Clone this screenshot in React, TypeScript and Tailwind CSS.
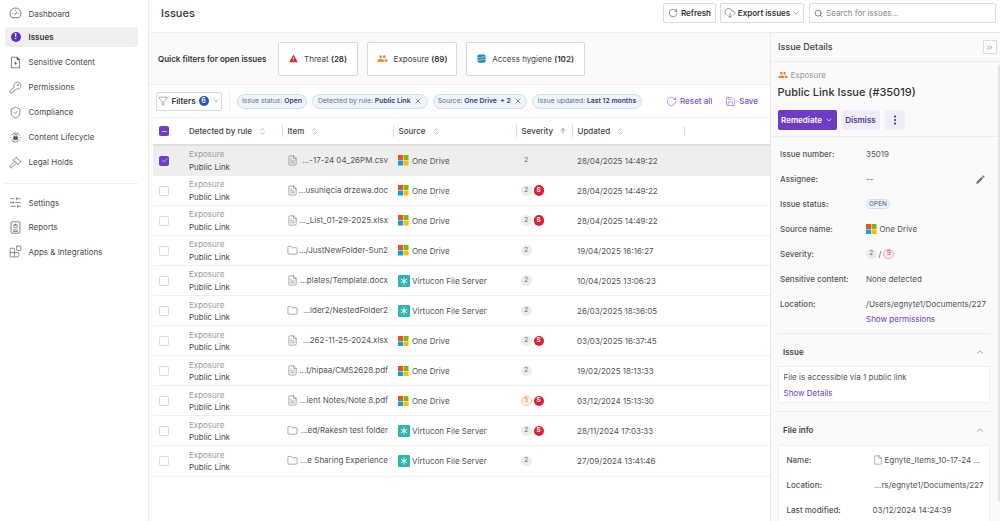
import {
  ArrowUp,
  Blocks,
  Check,
  ChevronDown,
  ChevronUp,
  ChevronsRight,
  ChevronsUpDown,
  CloudDownload,
  EllipsisVertical,
  File,
  FileText,
  Filter,
  Folder,
  Gavel,
  KeyRound,
  Minus,
  RotateCw,
  Save,
  Search,
  ShieldCheck,
  SlidersHorizontal,
  X,
} from "lucide-react";
import { MdEdit, MdPeople } from "react-icons/md";

const WindowsLogo = () => (
  <svg viewBox="0 0 12 12" className="w-[10.5px] h-[10.5px] shrink-0">
    <rect x="0" y="0" width="5.7" height="5.7" fill="#f25022" />
    <rect x="6.3" y="0" width="5.7" height="5.7" fill="#7fba00" />
    <rect x="0" y="6.3" width="5.7" height="5.7" fill="#00a4ef" />
    <rect x="6.3" y="6.3" width="5.7" height="5.7" fill="#ffb900" />
  </svg>
);

const VirtuconLogo = () => (
  <svg viewBox="0 0 12 12" className="w-[12px] h-[12px] shrink-0">
    <rect width="12" height="12" rx="1" fill="#2fb5ad" />
    <path d="M6 2.8v6.4M3.2 4.4l5.6 3.2M8.8 4.4L3.2 7.6" stroke="#e8fbf9" strokeWidth="1" strokeLinecap="round" />
  </svg>
);

const DashboardIcon = () => (
  <svg viewBox="0 0 16 16" className="w-[13px] h-[13px]" fill="none" stroke="#555" strokeWidth="0.9">
    <path d="M3.6 13.2a6.8 6.8 0 1 1 8.8 0z" />
    <path d="M6.8 9.6l3.4-3.2" strokeWidth="1.2" />
    <path d="M3.5 8h1M8 3.6v1M11.5 8h1" />
  </svg>
);

const ContentLifecycleIcon = () => (
  <svg viewBox="0 0 16 16" className="w-[13px] h-[13px]" fill="none" stroke="#555" strokeWidth="0.9">
    <path d="M3 5.5a5.5 5.5 0 0 1 10 0M13 10.5a5.5 5.5 0 0 1-10 0" />
    <path d="M1 8h1M14 8h1" />
    <rect x="5.5" y="7" width="5" height="3.6" rx="0.5" fill="#555" />
    <path d="M6.5 7V5.8a1.5 1.5 0 0 1 3 0V7" />
  </svg>
);

const ReportsIcon = () => (
  <svg viewBox="0 0 16 16" className="w-[13px] h-[13px]" fill="none" stroke="#555" strokeWidth="0.9">
    <rect x="2.5" y="1" width="11" height="14" rx="1.5" />
    <circle cx="8" cy="6.2" r="2.3" />
    <path d="M8 6.2V3.9M5 11h6M5 12.8h6" />
  </svg>
);

const SensitiveIcon = () => (
  <svg viewBox="0 0 16 16" className="w-[13px] h-[13px]" fill="none" stroke="#555" strokeWidth="0.9">
    <path d="M3 1.5h7l3 3v10H3z" />
    <path d="M10 1.5l3 3h-3z" fill="#333" />
    <path d="M6 9h4M8 7v4" />
  </svg>
);

const ThreatIcon = () => (
  <svg viewBox="0 0 12 12" className="w-[9px] h-[9px] shrink-0">
    <path d="M6 0.8L11.8 11H0.2z" fill="#e0242f" />
    <path d="M6 4.4v3.2M6 8.6v1" stroke="#fff" strokeWidth="1" />
  </svg>
);

const HygieneIcon = () => (
  <svg viewBox="0 0 12 12" className="w-[9px] h-[9px] shrink-0">
    <rect x="0.5" y="0.5" width="11" height="11" rx="2.5" fill="#1e8ea8" />
    <path d="M0.5 4.3c2 1 3.5 1 5.5 0s3.5-1 5.5 0M0.5 7.7c2 1 3.5 1 5.5 0s3.5-1 5.5 0" stroke="#e6f6fa" strokeWidth="0.9" fill="none" />
  </svg>
);

type NavItem = { label: string; icon: React.ReactNode };

const navTop: NavItem[] = [
  { label: "Sensitive Content", icon: <SensitiveIcon /> },
  { label: "Permissions", icon: <KeyRound className="w-[13px] h-[13px] text-[#555]" strokeWidth={1.2} /> },
  { label: "Compliance", icon: <ShieldCheck className="w-[13px] h-[13px] text-[#555]" strokeWidth={1.2} /> },
  { label: "Content Lifecycle", icon: <ContentLifecycleIcon /> },
  { label: "Legal Holds", icon: <Gavel className="w-[13px] h-[13px] text-[#555]" strokeWidth={1.2} /> },
];

const navBottom: NavItem[] = [
  { label: "Settings", icon: <SlidersHorizontal className="w-[13px] h-[13px] text-[#555]" strokeWidth={1.2} /> },
  { label: "Reports", icon: <ReportsIcon /> },
  { label: "Apps & Integrations", icon: <Blocks className="w-[13px] h-[13px] text-[#555]" strokeWidth={1.2} /> },
];

const NavRow = ({ item }: { item: NavItem }) => (
  <div className="flex items-center h-[20px] pl-[3px] rounded-[3px] text-[8px] text-[#4a4a4a]">
    <span className="w-[15px] flex justify-center shrink-0">{item.icon}</span>
    <span className="ml-[5.5px]">{item.label}</span>
  </div>
);

const Sidebar = () => (
  <aside className="w-[149px] shrink-0 border-r border-[#ececec] pl-[5px] pr-[10px] pt-[3.5px] flex flex-col">
    <div className="-mb-[1.5px]">
      <NavRow item={{ label: "Dashboard", icon: <DashboardIcon /> }} />
    </div>
    <div className="flex flex-col gap-[5px] mt-[5px]">
      <div className="flex items-center h-[20px] pl-[3px] rounded-[3px] bg-[#efefef] text-[8px] font-semibold text-[#333]">
        <span className="w-[15px] flex justify-center shrink-0">
          <span className="w-[10px] h-[10px] rounded-full bg-[#5b2fc4] text-white text-[7.5px] font-bold flex items-center justify-center">
            !
          </span>
        </span>
        <span className="ml-[5.5px]">Issues</span>
      </div>
      {navTop.map((item) => (
        <NavRow key={item.label} item={item} />
      ))}
    </div>
    <div className="h-[1px] bg-[#efefef] mt-[11px] mb-[8.5px]" />
    <div className="flex flex-col gap-[4.5px]">
      {navBottom.map((item) => (
        <NavRow key={item.label} item={item} />
      ))}
    </div>
  </aside>
);

const Chip = ({ label, value, close, width }: { label: string; value: string; close?: boolean; width: string }) => (
  <div className={`${width} shrink-0 h-[15px] flex items-center justify-center rounded-full bg-[#eef5fd] border border-[#cbe0f7] text-[6.8px] whitespace-nowrap text-[#5f7290]`}>
    <span>{label}&nbsp;</span>
    <span className="font-semibold text-[#2f4279]">{value}</span>
    {close && <X className="w-[8px] h-[8px] ml-[3.5px] text-[#444]" strokeWidth={1.8} />}
  </div>
);

const QuickCard = ({ icon, label, count, width }: { icon: React.ReactNode; label: string; count: string; width: string }) => (
  <div className={`${width} h-[34px] bg-white border border-[#d9d9d9] rounded-[2px] flex items-center justify-center gap-[6px] text-[8px] text-[#444]`}>
    {icon}
    <span>
      {label} <span className="font-semibold text-[#333]">{count}</span>
    </span>
  </div>
);

const Header = ({ label, divider = true }: { label: string; divider?: boolean }) => (
  <div className={`flex items-center h-[12px] gap-[6px] text-[8px] font-medium text-[#444] ${divider ? "border-l border-[#dcdcdc] pl-[4.5px]" : ""}`}>
    <span>{label}</span>
    <ChevronsUpDown className="w-[9px] h-[9px] text-[#999]" strokeWidth={1.5} />
  </div>
);

type Row = {
  item: string;
  type: "file" | "folder";
  source: "one" | "virt";
  sev: string;
  sensitive?: boolean;
  updated: string;
};

const rows: Row[] = [
  { item: "...-17-24 04_26PM.csv", type: "file", source: "one", sev: "2", updated: "28/04/2025 14:49:22" },
  { item: "...usunięcia drzewa.doc", type: "file", source: "one", sev: "2", sensitive: true, updated: "28/04/2025 14:49:22" },
  { item: "..._List_01-29-2025.xlsx", type: "file", source: "one", sev: "2", sensitive: true, updated: "28/04/2025 14:49:22" },
  { item: ".../JustNewFolder-Sun2", type: "folder", source: "one", sev: "2", updated: "19/04/2025 16:16:27" },
  { item: "...plates/Template.docx", type: "file", source: "virt", sev: "2", updated: "10/04/2025 13:06:23" },
  { item: "...lder2/NestedFolder2", type: "folder", source: "virt", sev: "2", updated: "26/03/2025 18:36:05" },
  { item: "...262-11-25-2024.xlsx", type: "file", source: "one", sev: "2", sensitive: true, updated: "03/03/2025 16:37:45" },
  { item: "...t/hipaa/CMS2628.pdf", type: "file", source: "one", sev: "2", updated: "19/02/2025 18:13:33" },
  { item: "...ient Notes/Note 8.pdf", type: "file", source: "one", sev: "5", sensitive: true, updated: "03/12/2024 15:13:30" },
  { item: "...ed/Rakesh test folder", type: "folder", source: "virt", sev: "2", sensitive: true, updated: "28/11/2024 17:03:33" },
  { item: "...e Sharing Experience", type: "folder", source: "virt", sev: "2", updated: "27/09/2024 13:41:46" },
];

const gridCols = "grid grid-cols-[36px_93px_111px_123px_56px_1fr] items-center";

const TableRow = ({ row, selected }: { row: Row; selected: boolean }) => (
  <div className={`${gridCols} h-[30.05px] border-b border-[#efefef] ${selected ? "bg-[#eeeeee]" : ""}`}>
    <div className="pl-[6px]">
      {selected ? (
        <span className="w-[10px] h-[10px] rounded-[2px] bg-[#6d3fc8] flex items-center justify-center">
          <Check className="w-[7px] h-[7px] text-white" strokeWidth={2} />
        </span>
      ) : (
        <span className="block w-[10px] h-[10px] rounded-[2px] border border-[#dcdcdc] bg-white" />
      )}
    </div>
    <div className="flex flex-col gap-[2.5px] text-[8px] leading-[10px]">
      <span className="text-[#9a9a9a]">Exposure</span>
      <span className="text-[#4a4a4a]">Public Link</span>
    </div>
    <div className="flex items-center justify-between pl-[5px] pr-[5px] text-[8px] text-[#555] -mt-[1px]">
      {row.type === "file" ? (
        <FileText className="w-[11px] h-[11px] text-[#666] shrink-0" strokeWidth={1.2} />
      ) : (
        <Folder className="w-[11px] h-[11px] text-[#666] shrink-0" strokeWidth={1.2} />
      )}
      <span className="whitespace-nowrap">{row.item}</span>
    </div>
    <div className="flex items-center pl-[5px] text-[8px] text-[#555]">
      <span className="w-[14px] shrink-0">{row.source === "one" ? <WindowsLogo /> : <VirtuconLogo />}</span>
      <span>{row.source === "one" ? "One Drive" : "Virtucon File Server"}</span>
    </div>
    <div className="flex items-center gap-[2px] pl-[5px]">
      {row.sev === "5" ? (
        <span className="w-[10.5px] h-[10.5px] rounded-full bg-[#fdf0e3] border border-[#f6c896] text-[6.5px] text-[#d98a3c] flex items-center justify-center">5</span>
      ) : (
        <span className="w-[10.5px] h-[10.5px] rounded-full bg-[#ececec] text-[6.5px] text-[#666] flex items-center justify-center">{row.sev}</span>
      )}
      {row.sensitive && (
        <span className="w-[10.5px] h-[10.5px] rounded-full bg-[#dc1f35] text-[6.5px] font-bold text-white flex items-center justify-center">S</span>
      )}
    </div>
    <div className="pl-[5px] text-[8px] text-[#555] whitespace-nowrap">{row.updated}</div>
  </div>
);

const Field = ({ label, children }: { label: string; children: React.ReactNode }) => (
  <div className="flex items-center h-[25px] shrink-0 text-[8px]">
    <span className="w-[86px] shrink-0 font-medium text-[#555]">{label}</span>
    <div className="flex-1 flex items-center text-[#555] whitespace-nowrap">{children}</div>
  </div>
);

const DetailsPanel = () => (
  <aside className="w-[230px] shrink-0 border-l border-t border-[#e8e8e8] bg-[#fafafa] flex flex-col overflow-hidden relative">
    <div className="h-[29px] shrink-0 border-b border-[#ececec] flex items-center justify-between pl-[7px] pr-[3.5px]">
      <span className="text-[9px] font-medium text-[#444]">Issue Details</span>
      <span className="w-[14px] h-[14px] bg-white border border-[#ddd] rounded-[1px] flex items-center justify-center">
        <ChevronsRight className="w-[9px] h-[9px] text-[#555]" strokeWidth={1.4} />
      </span>
    </div>
    <div className="h-[75px] shrink-0 border-b border-[#ececec] px-[6.5px] pt-[7px]">
      <div className="flex items-center gap-[3px] h-[12px] text-[8px] text-[#999]">
        <MdPeople className="w-[10px] h-[10px] text-[#f0842c]" />
        Exposure
      </div>
      <div className="mt-[2px] text-[11px] leading-[18px] font-medium text-[#333] whitespace-nowrap">Public Link Issue (#35019)</div>
      <div className="flex items-center gap-[5px] mt-[9px]">
        <span className="w-[59px] h-[20px] rounded-[2px] bg-[#6d3bc4] text-white text-[8px] font-semibold flex items-center justify-center gap-[3px]">
          Remediate <ChevronDown className="w-[8px] h-[8px]" strokeWidth={2} />
        </span>
        <span className="w-[38px] h-[20px] rounded-[2px] bg-[#f0ecf8] text-[#4f3a8c] text-[8px] font-semibold flex items-center justify-center">Dismiss</span>
        <span className="w-[20px] h-[20px] rounded-[2px] bg-[#f0ecf8] text-[#4f3a8c] flex items-center justify-center">
          <EllipsisVertical className="w-[12px] h-[12px]" strokeWidth={2.5} />
        </span>
      </div>
    </div>
    <div className="pl-[9px] pr-[9px] pt-[4.5px] flex flex-col shrink-0">
      <Field label="Issue number:">35019</Field>
      <Field label="Assignee:">
        <span className="flex-1">--</span>
        <MdEdit className="w-[11px] h-[11px] text-[#777] mr-[5px]" />
      </Field>
      <Field label="Issue status:">
        <span className="h-[10px] w-[24px] rounded-full bg-[#eef5fd] border border-[#cbe0f7] text-[6.5px] leading-[8px] text-center text-[#3d5a94]">OPEN</span>
      </Field>
      <Field label="Source name:">
        <WindowsLogo />
        <span className="ml-[3px]">One Drive</span>
      </Field>
      <Field label="Severity:">
        <span className="w-[10.5px] h-[10.5px] rounded-full bg-[#ececec] text-[6.5px] text-[#666] flex items-center justify-center">2</span>
        <span className="mx-[2px]">/</span>
        <span className="w-[10.5px] h-[10.5px] rounded-full bg-[#fdecee] border border-[#f2a3ac] text-[6.5px] text-[#d0364a] flex items-center justify-center">9</span>
      </Field>
      <Field label="Sensitive content:">None detected</Field>
      <Field label="Location:">/Users/egnyte1/Documents/227</Field>
      <div className="pl-[86px] -mt-[4px] text-[8px] leading-[12px] text-[#6d3fc8]">Show permissions</div>
    </div>
    <div className="ml-[6.5px] mr-[10px] mt-[8.5px] border-t border-[#ececec] shrink-0" />
    <div className="flex items-center justify-between h-[32px] shrink-0 pt-[4px] pl-[12px] pr-[15px] text-[8px] font-semibold text-[#444]">
      Issue <ChevronUp className="w-[10px] h-[10px] text-[#666]" strokeWidth={1.5} />
    </div>
    <div className="ml-[6.5px] mr-[10px] h-[37px] shrink-0 bg-white border border-[#efefef] rounded-[1px] pl-[5px] pt-[4px] text-[8px] text-[#555]">
      <div className="leading-[12px]">File is accessible via 1 public link</div>
      <div className="leading-[12px] mt-[4px] text-[#6d3fc8]">Show Details</div>
    </div>
    <div className="ml-[6.5px] mr-[10px] mt-[8px] border-t border-[#ececec] shrink-0" />
    <div className="flex items-center justify-between h-[33px] shrink-0 pt-[3px] pl-[12px] pr-[15px] text-[8px] font-semibold text-[#444]">
      File info <ChevronUp className="w-[10px] h-[10px] text-[#666]" strokeWidth={1.5} />
    </div>
    <div className="ml-[6.5px] mr-[10px] bg-white border border-[#efefef] rounded-[1px] px-[8px] pt-[1px] shrink-0 h-[90px]">
      <div className="flex items-center h-[25px] text-[8px]">
        <span className="w-[86px] shrink-0 font-medium text-[#555]">Name:</span>
        <File className="w-[10px] h-[10px] text-[#666] shrink-0" strokeWidth={1.2} />
        <span className="ml-[2px] text-[#555] whitespace-nowrap">Egnyte_Items_10-17-24 ...</span>
      </div>
      <div className="flex items-center h-[25px] text-[8px]">
        <span className="w-[86px] shrink-0 font-medium text-[#555]">Location:</span>
        <span className="ml-[2px] text-[#555] whitespace-nowrap">...rs/egnyte1/Documents/227</span>
      </div>
      <div className="flex items-center h-[25px] text-[8px]">
        <span className="w-[86px] shrink-0 font-medium text-[#555]">Last modified:</span>
        <span className="text-[#555] whitespace-nowrap">03/12/2024 14:24:39</span>
      </div>
    </div>
    <div className="absolute right-0 top-[32px] bottom-[20px] w-[2px] bg-[#e4e4e4]" />
  </aside>
);

export default function App() {
  return (
    <div className="w-[1000px] h-[521px] overflow-hidden flex bg-white font-['Inter',sans-serif]">
      <Sidebar />
      <div className="flex-1 min-w-0 flex flex-col">
        {/* top bar */}
        <div className="h-[32px] shrink-0 flex items-center pl-[12px] pr-[4px]">
          <h1 className="text-[11px] font-medium text-[#333] pb-[6px]">Issues</h1>
          <div className="ml-auto flex items-center pb-[6px]">
            <span className="w-[53px] h-[20px] bg-white border border-[#dcdcdc] rounded-[2px] flex items-center justify-center gap-[3px] text-[8px] font-semibold text-[#333]">
              <RotateCw className="w-[10px] h-[10px] text-[#444]" strokeWidth={1.3} />
              Refresh
            </span>
            <span className="w-[84px] h-[20px] ml-[4px] bg-white border border-[#dcdcdc] rounded-[2px] flex items-center justify-center gap-[2px] text-[8px] font-semibold text-[#333]">
              <CloudDownload className="w-[12px] h-[12px] text-[#444]" strokeWidth={1.1} />
              Export issues
              <ChevronDown className="w-[8px] h-[8px] text-[#444]" strokeWidth={1.5} />
            </span>
            <span className="w-[187px] h-[20px] ml-[5px] bg-white border border-[#dcdcdc] rounded-[2px] flex items-center pl-[4px] gap-[3px] text-[8px] text-[#888]">
              <Search className="w-[9px] h-[9px] text-[#333]" strokeWidth={1.5} />
              Search for issues...
            </span>
          </div>
        </div>
        <div className="flex-1 min-h-0 flex">
          <main className="flex-1 min-w-0 flex flex-col">
            <div className="h-[53px] shrink-0 bg-[#fafafa] border-t border-b border-[#efefef] flex items-center pl-[9px]">
              <span className="w-[120px] text-[8px] font-semibold text-[#333] whitespace-nowrap">Quick filters for open issues</span>
              <div className="flex items-center gap-[9px]">
                <QuickCard width="w-[80px]" label="Threat" count="(28)" icon={<ThreatIcon />} />
                <QuickCard width="w-[90px]" label="Exposure" count="(89)" icon={<MdPeople className="w-[11px] h-[11px] text-[#f0842c]" />} />
                <QuickCard width="w-[119px]" label="Access hygiene" count="(102)" icon={<HygieneIcon />} />
              </div>
            </div>
            <div className="h-[32px] shrink-0 flex items-center pl-[7px] pr-[12px]">
              <div className="w-[66px] h-[19px] border border-[#d9d9d9] rounded-[2px] flex items-center justify-center gap-[3px] text-[8px] font-semibold text-[#333]">
                <Filter className="w-[10px] h-[10px] text-[#555]" strokeWidth={1.1} />
                Filters
                <span className="w-[10px] h-[10px] rounded-full bg-[#1d53c4] text-white text-[7px] flex items-center justify-center">6</span>
                <ChevronDown className="w-[8px] h-[8px] text-[#555]" strokeWidth={1.5} />
              </div>
              <div className="w-[1px] h-[20px] bg-[#efefef] ml-[7px] mr-[7px]" />
              <div className="flex items-center gap-[5px]">
                <Chip width="w-[70px]" label="Issue status:" value="Open" />
                <Chip width="w-[116px]" label="Detected by rule:" value="Public Link" close />
                <Chip width="w-[94px]" label="Source:" value={"One Drive\u00A0\u00A0+ 2"} close />
                <Chip width="w-[110px]" label="Issue updated:" value="Last 12 months" />
              </div>
              <div className="ml-auto flex items-center gap-[13px] text-[8px] font-medium text-[#7a4fd0]">
                <span className="flex items-center gap-[3px]">
                  <RotateCw className="w-[11px] h-[11px]" strokeWidth={1.3} />
                  Reset all
                </span>
                <span className="flex items-center gap-[3px]">
                  <Save className="w-[11px] h-[11px]" strokeWidth={1.2} />
                  Save
                </span>
              </div>
            </div>
            <div className="flex-1 pl-[4px]">
              <div className={`${gridCols} h-[29px] border-t border-b-2 border-t-[#efefef] border-b-[#dedede]`}>
                <div className="pl-[6px]">
                  <span className="w-[10px] h-[10px] rounded-[2px] bg-[#6d3fc8] flex items-center justify-center">
                    <Minus className="w-[7px] h-[7px] text-white" strokeWidth={2} />
                  </span>
                </div>
                <Header label="Detected by rule" divider={false} />
                <Header label="Item" />
                <Header label="Source" />
                <div className="flex items-center h-[12px] gap-[6px] text-[8px] font-medium text-[#444] border-l border-[#dcdcdc] pl-[4.5px]">
                  <span>Severity</span>
                  <ArrowUp className="w-[8px] h-[8px] text-[#555]" strokeWidth={1.5} />
                </div>
                <div className="h-[12px] border-l border-[#dcdcdc] pl-[4.5px] flex items-center">
                  <div className="w-[106px] flex items-center gap-[6px] text-[8px] font-medium text-[#444]">
                    <span>Updated</span>
                    <ChevronsUpDown className="w-[9px] h-[9px] text-[#999]" strokeWidth={1.5} />
                  </div>
                  <div className="w-[1px] h-[10px] bg-[#dcdcdc]" />
                </div>
              </div>
              {rows.map((row, i) => (
                <TableRow key={row.item} row={row} selected={i === 0} />
              ))}
            </div>
          </main>
          <DetailsPanel />
        </div>
      </div>
    </div>
  );
}
